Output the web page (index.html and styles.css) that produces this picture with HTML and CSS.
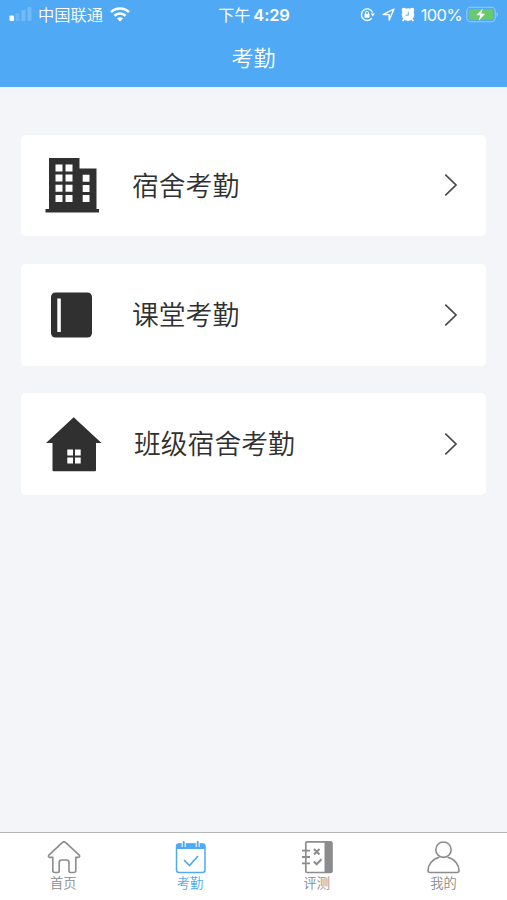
FILE: index.html
```
<!DOCTYPE html>
<html lang="zh-CN">
<head>
  <meta charset="UTF-8" />
  <meta name="viewport" content="width=device-width, initial-scale=1.0"/>
  <title>考勤</title>
  <link rel="stylesheet" href="styles.css">
</head>
<body>

  <div class="header">
    <div class="status-bar">
      <div class="status-left">
        <svg class="signal" width="24" height="16" viewBox="0 0 24 16" fill="#fff">
          <rect x="0.500" y="8.500" width="4.500" height="5.500" rx="1"/>
          <rect x="6.500" y="6" width="4" height="8" rx="1" opacity=".15"/>
          <rect x="12.500" y="3" width="4" height="11" rx="1" opacity=".2"/>
          <rect x="18.500" y="0" width="4" height="14" rx="1" opacity=".2"/>
        </svg>
        <span class="carrier">中国联通</span>
        <svg class="wifi" width="20" height="15" viewBox="0 0 20 15" fill="none" stroke="#fff" stroke-width="2.6">
          <path d="M1 5.200a12.800 12.800 0 0 1 18 0"/>
          <path d="M4.400 8.800a8 8 0 0 1 11.200 0"/>
          <path d="M10 14.600l-3-3a4.300 4.300 0 0 1 6 0z" fill="#fff" stroke="none"/>
        </svg>
      </div>
      <div class="status-time"><span>下午</span><span class="clock">4:29</span></div>
      <div class="status-right">
        <svg width="15" height="15" viewBox="0 0 15 15" fill="none" stroke="#fff" stroke-width="1.4">
          <path d="M12.600 5.500A5.800 5.800 0 1 0 11.800 11.300"/>
          <path d="M10.700 6.400h4.300l-2.100 3z" fill="#fff" stroke="none"/>
          <rect x="4.500" y="6.800" width="5" height="3.900" rx=".5" fill="#fff" stroke="none"/>
          <path d="M5.500 7V5.800a1.500 1.500 0 0 1 3 0V7" stroke-width="1"/>
        </svg>
        <svg class="location" width="13" height="13" viewBox="0 0 13 13" fill="none" stroke="#fff" stroke-width="1.4" stroke-linejoin="round">
          <path d="M1 6.600L12 1 7.200 12V6.600z"/>
        </svg>
        <svg class="alarm" width="14" height="15" viewBox="0 0 14 15">
          <circle cx="2.900" cy="2.900" r="2.200" fill="#fff"/>
          <circle cx="11.100" cy="2.900" r="2.200" fill="#fff"/>
          <path d="M3 12l-1.300 2M11 12l1.300 2" stroke="#fff" stroke-width="1.600"/>
          <circle cx="7" cy="7.600" r="6.300" fill="#fff"/>
          <path d="M7.300 4.600v3.600H4.500" fill="none" stroke="#50a9f5" stroke-width=".9"/>
        </svg>
        <span class="percent">100%</span>
        <svg class="battery" width="33" height="17" viewBox="0 0 33 17">
          <rect x=".8" y="1.200" width="28.400" height="14.600" rx="4" fill="none" stroke="#fff" stroke-opacity=".4" stroke-width="1.100"/>
          <rect x="2.800" y="3.200" width="24.400" height="10.600" rx="2" fill="#68ca6a"/>
          <path d="M30.500 6v5c1.800-.7 1.800-4.300 0-5z" fill="#fff" opacity=".4"/>
          <path d="M16.800 2.600l-6.300 6.700h3.800l-1.600 5.500 6.500-7h-3.900z" fill="#fff"/>
        </svg>
      </div>
    </div>
    <h1 class="title">考勤</h1>
  </div>

  <div class="menu">
    <a class="menu-item">
      <svg class="menu-icon" width="58" height="58" viewBox="0 0 58 58">
        <path fill="#303030" d="M5 2h30.500V12.500H52.500V53H55v3.500H1.500V53H5z"/>
        <g fill="#fff">
          <path d="M11.500 8.500h7v7h-7zM21.500 8.500h7v7h-7zM11.500 18.500h7v7h-7zM21.500 18.500h7v7h-7zM11.500 28.700h7v7h-7zM21.500 28.700h7v7h-7zM11.500 39h7v7h-7zM21.500 39h7v7h-7z"/>
          <path d="M38.700 18.700h6.800v7h-6.800zM38.700 28.900h6.800v7h-6.800zM38.700 39h6.800v7h-6.800z"/>
        </g>
      </svg>
      <span class="menu-text">宿舍考勤</span>
      <svg class="arrow" width="14" height="24" viewBox="0 0 14 24"><path d="M1.300 1.600L12 12 1.300 22.400"/></svg>
    </a>
    <a class="menu-item">
      <svg class="menu-icon" width="58" height="58" viewBox="0 0 58 58">
        <rect x="7" y="6.500" width="41" height="45" rx="4.500" fill="#303030"/>
        <rect x="13.300" y="12.500" width="3.500" height="33.500" fill="#fff"/>
      </svg>
      <span class="menu-text">课堂考勤</span>
      <svg class="arrow" width="14" height="24" viewBox="0 0 14 24"><path d="M1.300 1.600L12 12 1.300 22.400"/></svg>
    </a>
    <a class="menu-item">
      <svg class="menu-icon" width="58" height="58" viewBox="0 0 58 58">
        <path fill="#303030" d="M29.700 2.200L57.500 28H52v27.200q0 1-1 1H9.500q-1 0-1-1V28H2z"/>
        <path fill="#fff" d="M23.300 34.500H29v6h-5.700zM31 34.500h5.700v6H31zM23.300 42.400H29v6h-5.700zM31 42.400h5.700v6H31z"/>
      </svg>
      <span class="menu-text wide">班级宿舍考勤</span>
      <svg class="arrow" width="14" height="24" viewBox="0 0 14 24"><path d="M1.300 1.600L12 12 1.300 22.400"/></svg>
    </a>
  </div>

  <div class="tab-bar">
    <a class="tab">
      <svg class="tab-home" width="34" height="34" viewBox="0 0 34 34" fill="none" stroke="#8c8c8c" stroke-width="1.600" stroke-linejoin="round">
        <path d="M15.200 2.600q1.800-1.600 3.600 0L32.200 15.200q1.200 1.700-.8 2.200H28.800V30.500q0 2-2 2h-3.200q-1.600 0-1.600-1.600V22.500q0-2.500-2.500-2.500h-4.800q-2.500 0-2.500 2.500v8.400q0 1.600-1.600 1.600H7.800q-2 0-2-2V17.400H2.700q-2-.5-.8-2.200z"/>
      </svg>
      <span>首页</span>
    </a>
    <a class="tab active">
      <svg width="34" height="34" viewBox="0 0 34 34" fill="none" stroke="#50a9f5">
        <rect x="3.500" y="4" width="28.500" height="28.500" rx="2.500" stroke-width="1.500"/>
        <path d="M3.500 9V6q0-2.500 2.500-2.500H29.500q2.500 0 2.500 2.500v3z" fill="#50a9f5" stroke="none"/>
        <path d="M10.700 1v6M24.700 1v6" stroke="#fff" stroke-width="4"/>
        <path d="M10.700 2v4.500M24.700 2v4.500" stroke-width="2" stroke-linecap="round"/>
        <path d="M11 20l5.500 5.500L25 16" stroke-width="1.700"/>
      </svg>
      <span>考勤</span>
    </a>
    <a class="tab">
      <svg width="34" height="34" viewBox="0 0 34 34" fill="none" stroke="#8c8c8c" stroke-width="1.700">
        <rect x="5.800" y="1.800" width="26" height="30.700" rx="1.500"/>
        <path d="M24.500 1.500h6.500q1.500 0 1.500 1.500v28.500q0 1.500-1.500 1.500h-6.500z" fill="#8c8c8c" stroke="none"/>
        <path d="M2 10.700h8M2 17h8M2 23.300h8" stroke-width="1.800"/>
        <path d="M14 9l5.500 5.500M19.500 9L14 14.500M13.800 21.500l2.900 2.700 4.800-4.900" stroke-width="2.100"/>
      </svg>
      <span>评测</span>
    </a>
    <a class="tab">
      <svg width="34" height="34" viewBox="0 0 34 34" fill="none" stroke="#8c8c8c" stroke-width="1.600">
        <circle cx="16.500" cy="9.700" r="7.700"/>
        <path d="M12.500 17.300C5 19 1 25 1 30.500q0 2 2 2h27q2 0 2-2C32 25 28 19 20.500 17.300"/>
      </svg>
      <span>我的</span>
    </a>
  </div>

</body>
</html>
```
FILE: styles.css
```
* {
  margin: 0;
  padding: 0;
  box-sizing: border-box;
}

body {
  font-family: "Noto Sans CJK SC", sans-serif;
  font-weight: 350;
  display: flex;
  flex-direction: column;
  height: 100vh;
  background: #f4f5f8;
  color: #303030;
}

svg {
  display: block;
  flex-shrink: 0;
}

.header {
  height: 87px;
  background: #50a9f5;
  color: #fff;
}

.status-bar {
  display: flex;
  align-items: center;
  height: 29px;
  padding: 0 8px 0 9px;
  font-size: 16.3px;
  line-height: 29px;
}

.status-left, .status-right {
  flex: 1;
  display: flex;
  align-items: center;
}

.status-right {
  justify-content: flex-end;
}

.carrier {
  margin: 0 7px 0 5px;
}

.status-time {
  display: flex;
  gap: 3px;
  font-size: 16px;
  font-weight: 400;
}

.clock {
  font-family: Inter, sans-serif;
  font-size: 16.5px;
  font-weight: 600;
  letter-spacing: -0.2px;
  line-height: 30px;
}

.location {
  margin-left: 7px;
}

.alarm {
  margin-left: 6px;
}

.percent {
  margin: 0 4px 0 6px;
  font-family: Inter, sans-serif;
  font-size: 16.5px;
  font-weight: 400;
  letter-spacing: -0.6px;
  line-height: 30px;
}

.title {
  font-size: 22px;
  font-weight: 350;
  line-height: 55px;
  text-align: center;
}

.menu {
  flex: 1;
  display: flex;
  flex-direction: column;
  gap: 27.5px;
  padding: 47.5px 21px 0;
}

.menu-item {
  display: flex;
  align-items: center;
  height: 101.8px;
  padding: 0 28px 0 23px;
  background: #fff;
  border-radius: 5px;
}

.menu-text {
  flex: 1;
  margin-left: 30px;
  padding-bottom: 1px;
  font-size: 26.8px;
  line-height: 40px;
}

.menu-text.wide {
  margin-left: 32px;
}

.arrow {
  fill: none;
  stroke: #4a4a4a;
  stroke-width: 1.7;
}

.tab-bar {
  display: flex;
  height: 68px;
  padding-top: 7px;
  background: #fff;
  border-top: 1px solid #b5b5b5;
}

.tab {
  flex: 1;
  display: flex;
  flex-direction: column;
  align-items: center;
  color: #8c8c8c;
  font-size: 13.3px;
  line-height: 17px;
}

.tab-home {
  margin-left: 2px;
}

.tab.active {
  color: #50a9f5;
}
```
